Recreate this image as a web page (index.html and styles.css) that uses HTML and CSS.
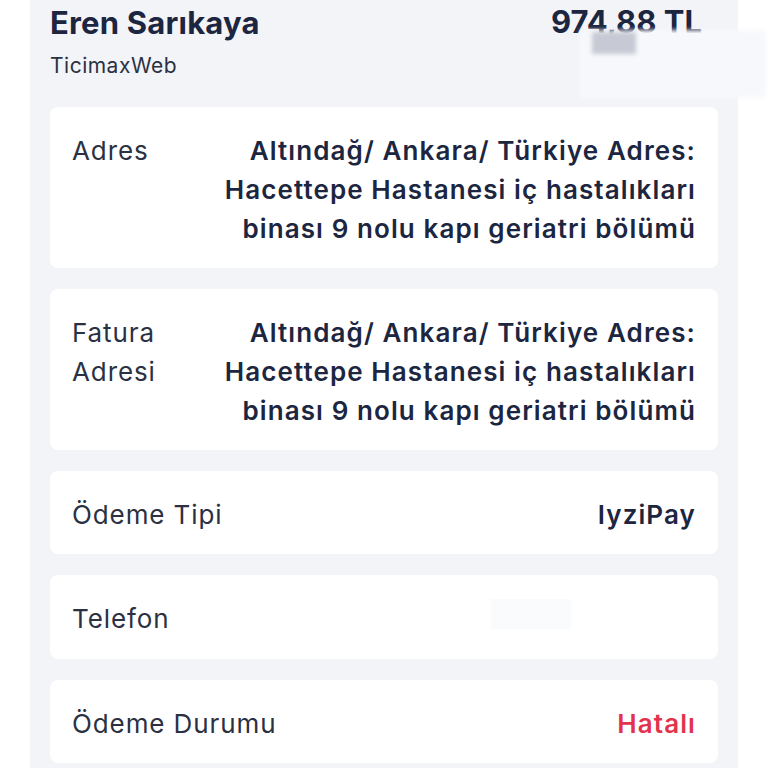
FILE: index.html
```html
<!DOCTYPE html>
<html lang="tr">

<head>
    <meta charset="UTF-8">
    <meta name="viewport" content="width=device-width, initial-scale=1.0">
    <title>Sipariş Detayı</title>
    <link rel="stylesheet" href="styles.css">
</head>

<body>
    <div class="panel">
        <div class="orderHead">
            <div class="customer">
                <div class="customerName">Eren Sarıkaya</div>
                <div class="customerShop">TicimaxWeb</div>
            </div>
            <div class="orderTotal">974,88 TL</div>
            <!-- bulanık alan -->
            <div class="mask"><span class="smudge"></span></div>
        </div>

        <div class="infoCard">
            <span class="infoLabel">Adres</span>
            <span class="infoValue">Altındağ/ Ankara/ Türkiye Adres:<br>Hacettepe Hastanesi iç hastalıkları<br>binası 9 nolu kapı geriatri bölümü</span>
        </div>
        <div class="infoCard">
            <span class="infoLabel">Fatura<br>Adresi</span>
            <span class="infoValue">Altındağ/ Ankara/ Türkiye Adres:<br>Hacettepe Hastanesi iç hastalıkları<br>binası 9 nolu kapı geriatri bölümü</span>
        </div>
        <div class="infoCard">
            <span class="infoLabel">Ödeme Tipi</span>
            <span class="infoValue">IyziPay</span>
        </div>
        <div class="infoCard">
            <span class="infoLabel">Telefon</span>
            <span class="infoValue"><span class="hidden"></span></span>
        </div>
        <div class="infoCard">
            <span class="infoLabel">Ödeme Durumu</span>
            <span class="infoValue error">Hatalı</span>
        </div>
    </div>
</body>

</html>
```

FILE: styles.css
```css
body {
    margin: 0;
    background: #ffffff;
    font-family: Inter, "Noto Sans", sans-serif;
    color: #1d2640;
}

.panel {
    width: 668px;
    margin-left: 30px;
    padding: 0 20px 10px;
    background: #f3f4f7;
    display: flex;
    flex-direction: column;
    gap: 21px;
}

.orderHead {
    position: relative;
    display: flex;
    justify-content: space-between;
    height: 86px;
}

.customerName {
    font-size: 31px;
    font-weight: 700;
    line-height: 46px;
    letter-spacing: 0.2px;
}

.customerShop {
    font-size: 21px;
    line-height: 30px;
    color: #2b3142;
    letter-spacing: 0.5px;
    margin-top: 5px;
}

.orderTotal {
    font-size: 31px;
    font-weight: 700;
    line-height: 44px;
    margin-right: 16px;
}

.mask {
    position: absolute;
    left: 530px;
    top: 30px;
    width: 186px;
    height: 68px;
    background: #f7f8fb;
    filter: blur(2px);
}

.smudge {
    position: absolute;
    left: 12px;
    top: 2px;
    width: 44px;
    height: 22px;
    background: #c7cad4;
}

.infoCard {
    display: flex;
    justify-content: space-between;
    align-items: flex-start;
    gap: 20px;
    background: #ffffff;
    border-radius: 8px;
    padding: 24px 22px 20px;
    font-size: 26px;
    line-height: 39px;
}

.infoLabel {
    color: #2b3142;
    font-weight: 400;
    letter-spacing: 0.9px;
    flex: none;
}

.infoValue {
    text-align: right;
    font-weight: 600;
    color: #1d2640;
    letter-spacing: 1.1px;
    min-height: 39px;
}

.error {
    color: #e3334c;
}

.hidden {
    display: inline-block;
    width: 80px;
    height: 30px;
    margin-right: 125px;
    background: #fafbfc;
}
```
